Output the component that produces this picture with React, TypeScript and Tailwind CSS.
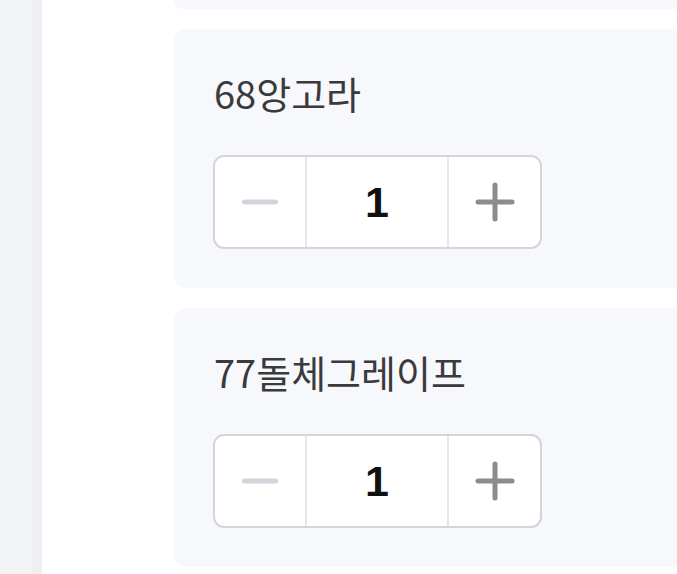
import React from "react";

function Stepper() {
  return (
    <div className="flex h-[94px] w-[329px] rounded-[11px] border-2 border-[#d3d5da] bg-white">
      <div className="flex w-[92px] items-center justify-center border-r-2 border-[#e6e7ea]">
        <svg width="38" height="8" viewBox="0 0 38 8">
          <line x1="3.5" y1="4" x2="34.5" y2="4" stroke="#d2d6dc" strokeWidth="5" strokeLinecap="round" />
        </svg>
      </div>
      <div className="flex w-[142px] items-center justify-center border-r-2 border-[#e6e7ea]">
        <span className="text-[43px] font-bold leading-none text-[#111111]" style={{ fontFamily: '"Liberation Sans", Arial, sans-serif' }}>1</span>
      </div>
      <div className="flex flex-1 items-center justify-center">
        <svg width="40" height="40" viewBox="0 0 40 40">
          <line x1="3" y1="20" x2="37" y2="20" stroke="#8c8c8c" strokeWidth="5" strokeLinecap="round" />
          <line x1="20" y1="3" x2="20" y2="37" stroke="#8c8c8c" strokeWidth="5" strokeLinecap="round" />
        </svg>
      </div>
    </div>
  );
}

function Card({ title }: { title: string }) {
  return (
    <div className="flex h-[259px] w-[560px] flex-col rounded-[12px] bg-[#f7f8fb] pl-[40px] pt-[38px]">
      <div className="text-[38px] leading-[52px] text-[#3a3a3d]">{title}</div>
      <div className="mt-[36px] -ml-[1px]">
        <Stepper />
      </div>
    </div>
  );
}

export default function App() {
  return (
    <div
      className="flex h-[574px] w-[677px] overflow-hidden bg-white"
      style={{ fontFamily: '"Noto Sans CJK KR", "Noto Sans", sans-serif' }}
    >
      <div className="w-[32px] shrink-0 bg-[#f3f4f6]" />
      <div className="w-[10px] shrink-0 bg-[#eeeff2]" />
      <div className="flex shrink-0 flex-col gap-[20px] pl-[132px]">
        <div className="h-[9px] w-[560px] rounded-b-[12px] bg-[#f7f8fb]" />
        <Card title="68앙고라" />
        <Card title="77돌체그레이프" />
      </div>
    </div>
  );
}
